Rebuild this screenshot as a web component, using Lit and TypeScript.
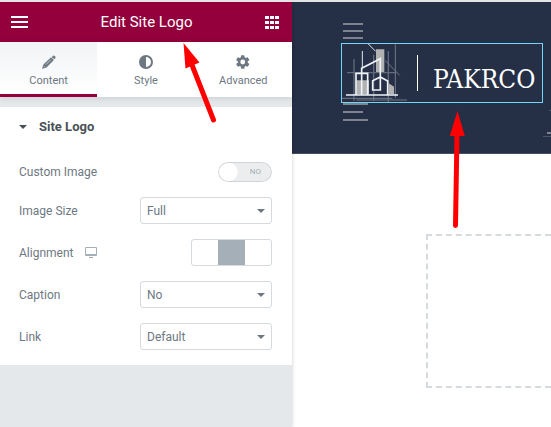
import { LitElement, html, css } from "lit";
import { customElement } from "lit/decorators.js";

@customElement("editor-panel")
class EditorPanel extends LitElement {
  static styles = css`
    :host {
      display: block;
      background: #e5e8eb;
      color: #6d7882;
      font: 12px/20px Roboto, sans-serif;
    }
    * {
      box-sizing: border-box;
    }
    button {
      font: inherit;
      color: inherit;
      background: none;
      border: 0;
      padding: 0;
      margin: 0;
      display: block;
    }
    svg {
      display: block;
    }
    .bar {
      display: flex;
      align-items: center;
      justify-content: space-between;
      height: 40px;
      padding: 0 13px 0 11px;
      background: #93003c;
      color: #fff;
    }
    .title {
      margin: 0;
      font-size: 15px;
      font-weight: 400;
    }
    .tabs {
      display: flex;
      height: 55px;
      background: #fff;
      box-shadow: 0 1px 6px rgba(0, 0, 0, 0.12);
    }
    .tab {
      flex: 1;
      display: flex;
      flex-direction: column;
      align-items: center;
      gap: 2px;
      padding-top: 13px;
      font-size: 11px;
      line-height: 20px;
    }
    .tab.active {
      background: linear-gradient(#f1f3f5, #fff);
      border-bottom: 3px solid #93003c;
    }
    .section {
      margin-top: 10px;
      padding-bottom: 15px;
      background: #fff;
    }
    .heading {
      display: flex;
      align-items: center;
      gap: 12px;
      width: 100%;
      height: 40px;
      padding-left: 19px;
      color: #495157;
      font-size: 13px;
      font-weight: 700;
    }
    .controls {
      display: grid;
      gap: 15px;
      padding: 15px 20px 0 19px;
    }
    .row {
      display: flex;
      align-items: center;
      justify-content: space-between;
    }
    .name {
      display: flex;
      align-items: center;
      gap: 12px;
      font-size: 12px;
    }
    .pick {
      display: grid;
      width: 132px;
      height: 27px;
    }
    .pick > * {
      grid-area: 1 / 1;
    }
    .pick svg {
      align-self: center;
      justify-self: end;
      margin-right: 7px;
      pointer-events: none;
    }
    select {
      appearance: none;
      width: 100%;
      padding: 0 6px;
      border: 1px solid #d5dadf;
      border-radius: 3px;
      background: #fff;
      color: inherit;
      font: inherit;
    }
    .switch {
      display: grid;
      width: 54px;
      height: 20px;
    }
    .switch > * {
      grid-area: 1 / 1;
    }
    .switch input {
      appearance: none;
      margin: 0;
      border-radius: 10px;
      background: radial-gradient(circle at 10px 10px, #fff 9px, transparent 10px) #ebedef;
      box-shadow: inset 0 0 0 1px #d0d4d8;
    }
    .switch span {
      align-self: center;
      justify-self: end;
      margin-right: 11px;
      color: #a4afb7;
      font-size: 8px;
      line-height: 20px;
      pointer-events: none;
    }
    .align {
      display: flex;
      width: 81px;
      height: 27px;
      border: 1px solid #d5dadf;
      border-radius: 3px;
      overflow: hidden;
    }
    .align button {
      flex: 1;
    }
    .align .on {
      background: #a4afb7;
      flex: 0 0 27px;
    }
  `;

  private caret = html`<svg width="8" height="4" viewBox="0 0 8 4" aria-hidden="true">
    <path d="M0 0h8L4 4z" fill="currentColor" />
  </svg>`;

  private select(id: string, label: string, value: string) {
    return html`<div class="row">
      <label class="name" for=${id}>${label}</label>
      <div class="pick">
        <select id=${id}><option>${value}</option></select>
        ${this.caret}
      </div>
    </div>`;
  }

  render() {
    return html`
      <header class="bar">
        <button aria-label="Menu">
          <svg width="17" height="12" viewBox="0 0 17 12">
            <path d="M0 1h17M0 6h17M0 11h17" stroke="#fff" stroke-width="2" />
          </svg>
        </button>
        <h1 class="title">Edit Site Logo</h1>
        <button aria-label="Widgets">
          <svg width="14" height="13" viewBox="0 0 14 13" fill="#fff">
            <path d="M0 0h4v3H0zM5 0h4v3H5zM10 0h4v3h-4zM0 5h4v3H0zM5 5h4v3H5zM10 5h4v3h-4zM0 10h4v3H0zM5 10h4v3H5zM10 10h4v3h-4z" />
          </svg>
        </button>
      </header>
      <nav class="tabs">
        <button class="tab active">
          <svg width="14" height="14" viewBox="0 0 14 14">
            <path
              d="M9.800 1.900 11 .7q.7-.6 1.400 0l1 1q.6.700 0 1.400L12.200 4.300zM9.100 2.200 11.900 5 4.500 12.500.3 13.800.1 13.600 1.400 9.600z"
              fill="currentColor"
            />
            <path d="M8.800 4.700 4 9.500M1.900 11.200l1 1" stroke="#fff" stroke-width="0.600" />
          </svg>
          Content
        </button>
        <button class="tab">
          <svg width="14" height="14" viewBox="0 0 14 14">
            <circle cx="7" cy="7" r="6" fill="none" stroke="currentColor" stroke-width="2" />
            <path d="M7 1a6 6 0 0 0 0 12z" fill="currentColor" />
          </svg>
          Style
        </button>
        <button class="tab">
          <svg width="14" height="14" viewBox="1 1 22 22" fill="currentColor">
            <path
              d="M19.400 13a7.700 7.700 0 0 0 0-2l2.300-1.700c.2-.2.3-.4.1-.7l-2.200-3.800c-.1-.2-.4-.3-.6-.2l-2.700 1.100a8 8 0 0 0-1.800-1L14.100 1.800c0-.3-.2-.4-.5-.4h-4c-.3 0-.5.1-.5.4l-.4 2.900a8 8 0 0 0-1.800 1L4.200 4.600c-.2-.1-.5 0-.6.2L1.400 8.600c-.2.300-.1.500.1.700L3.900 11a7.700 7.700 0 0 0 0 2l-2.400 1.700c-.2.200-.3.400-.1.700l2.200 3.800c.1.200.4.300.6.200l2.700-1.100a8 8 0 0 0 1.800 1l.4 2.900c0 .300.2.400.5.400h4c.3 0 .5-.1.5-.4l.4-2.900a8 8 0 0 0 1.800-1l2.700 1.100c.2.100.5 0 .6-.2l2.200-3.800c.2-.3.1-.5-.1-.7zM11.600 15.800a3.800 3.800 0 1 1 0-7.600 3.800 3.800 0 0 1 0 7.600z"
            />
          </svg>
          Advanced
        </button>
      </nav>
      <section class="section">
        <button class="heading" aria-expanded="true">${this.caret} Site Logo</button>
        <div class="controls">
          <div class="row">
            <label class="name" for="custom">Custom Image</label>
            <div class="switch"><input id="custom" type="checkbox" role="switch" /><span>NO</span></div>
          </div>
          ${this.select("size", "Image Size", "Full")}
          <div class="row">
            <div class="name">
              Alignment
              <svg width="12" height="11" viewBox="0 0 12 11" fill="#a4afb7">
                <path fill-rule="evenodd" d="M1 0h10q1 0 1 1v7q0 1-1 1H1Q0 9 0 8V1Q0 0 1 0zM1 1v6h10V1zM4 10h4v1H4z" />
              </svg>
            </div>
            <div class="align" role="group" aria-label="Alignment">
              <button aria-label="Left"></button>
              <button class="on" aria-label="Center" aria-pressed="true"></button>
              <button aria-label="Right"></button>
            </div>
          </div>
          ${this.select("caption", "Caption", "No")} ${this.select("link", "Link", "Default")}
        </div>
      </section>
    `;
  }
}

@customElement("site-preview")
class SitePreview extends LitElement {
  static styles = css`
    :host {
      display: block;
      overflow: hidden;
      background: #fff;
    }
    * {
      box-sizing: border-box;
    }
    svg {
      display: block;
    }
    .hero {
      position: relative;
      height: 152px;
      padding: 41px 8px 0 49px;
      background: #252f46;
      border-bottom: 1px solid #454d62;
    }
    .decor {
      position: absolute;
      top: 0;
    }
    .decor.left {
      left: 51px;
    }
    .decor.right {
      right: 0;
    }
    .logo {
      position: relative;
      display: flex;
      align-items: center;
      width: 202px;
      height: 60px;
      border: 1px solid #71d7f7;
      background: #252f46;
      color: #fff;
      text-decoration: none;
    }
    .rule {
      width: 1px;
      height: 36px;
      margin: 0 15px 0 9px;
      background: #fff;
    }
    .word {
      padding-top: 12px;
      font: 26px/32px "DejaVu Serif Condensed", "DejaVu Serif", serif;
    }
    .drop {
      height: 154px;
      margin: 80px 0 0 134px;
      border: 2px dashed #d5dadf;
      border-right: 0;
    }
  `;

  render() {
    return html`
      <header class="hero">
        <svg class="decor left" width="26" height="122" viewBox="0 0 26 122" aria-hidden="true">
          <path d="M0 22h20M0 29h20M0 36h20M0 102h25M0 110h20M0 118h25" stroke="#7d8390" stroke-width="2" />
        </svg>
        <svg class="decor right" width="8" height="150" viewBox="0 0 8 150" aria-hidden="true">
          <path d="M6 108.500h2M0 134.500h8" stroke="#4c5468" />
          <path d="M4 131h4" stroke="#7d8390" stroke-width="2" />
        </svg>
        <a class="logo" href="#">
          <svg width="66" height="58" viewBox="51 102 198 174" fill="none" aria-hidden="true">
            <path d="M153 118h25v70h-25zM94 211h38v42H94zM189 218l18 12v23h-18z" fill="#b2b2b2" />
            <path d="M87 147v126M146 134v138M190 123v153M66 188h146" stroke="#626a7b" stroke-width="4" />
            <path d="M211 103v161M180 151l44 45M51 265h151M94 270h152" stroke="#737a89" stroke-width="3" />
            <path d="M112 123v52M130 102l22 22" stroke="#e2e7ef" stroke-width="3" />
            <path d="M93 254v-64h35v64M110 254v-79l56-29v94h-23v-28l23-11 22 12v41M63 255h156" stroke="#eef3f8" stroke-width="5" />
          </svg>
          <span class="rule"></span>
          <span class="word">PAKRCO</span>
        </a>
      </header>
      <div class="drop"></div>
    `;
  }
}

@customElement("app-root")
class AppRoot extends LitElement {
  static styles = css`
    :host {
      display: block;
      position: relative;
      box-sizing: border-box;
      min-height: 100vh;
      border-top: 2px solid #e4e4e6;
      overflow: hidden;
      background: #fff;
    }
    .layout {
      display: grid;
      grid-template-columns: 292px 1fr;
      min-height: calc(100vh - 2px);
    }
    editor-panel {
      z-index: 1;
      box-shadow: 0 0 4px rgba(0, 0, 0, 0.2);
    }
    .marks {
      position: absolute;
      top: -2px;
      left: 0;
      z-index: 2;
      pointer-events: none;
    }
  `;

  render() {
    return html`
      <main class="layout">
        <editor-panel></editor-panel>
        <site-preview></site-preview>
      </main>
      <svg class="marks" width="480" height="240" viewBox="0 0 480 240" fill="#f00" stroke="#f00" aria-hidden="true">
        <path d="M183.500 43 185.500 68.500 199.500 62.500z" stroke="none" />
        <path d="M192 65 213.500 120M457 134 455.500 225.500" stroke-width="5" stroke-linecap="round" />
        <path d="M457.500 111 449.800 136H464.800z" stroke="none" />
      </svg>
    `;
  }
}
